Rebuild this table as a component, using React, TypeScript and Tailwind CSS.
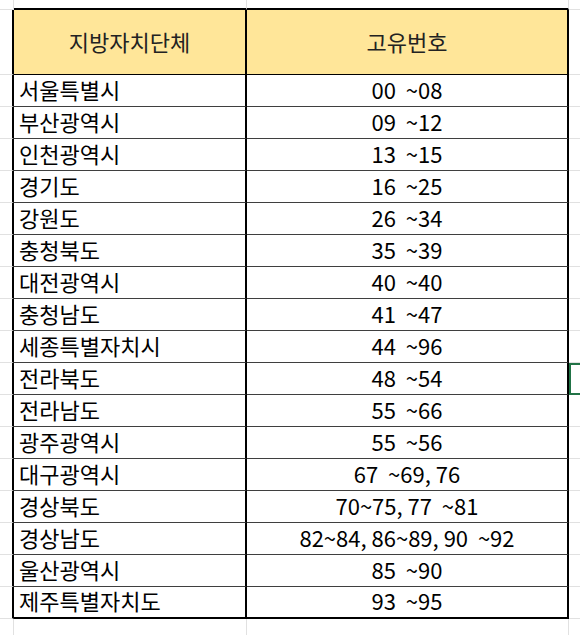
const regions: [string, string][] = [
  ['서울특별시', '00  ~08'],
  ['부산광역시', '09  ~12'],
  ['인천광역시', '13  ~15'],
  ['경기도', '16  ~25'],
  ['강원도', '26  ~34'],
  ['충청북도', '35  ~39'],
  ['대전광역시', '40  ~40'],
  ['충청남도', '41  ~47'],
  ['세종특별자치시', '44  ~96'],
  ['전라북도', '48  ~54'],
  ['전라남도', '55  ~66'],
  ['광주광역시', '55  ~56'],
  ['대구광역시', '67  ~69, 76'],
  ['경상북도', '70~75, 77  ~81'],
  ['경상남도', '82~84, 86~89, 90  ~92'],
  ['울산광역시', '85  ~90'],
  ['제주특별자치도', '93  ~95'],
];

const SELECTED = 9;

export default function App() {
  const last = regions.length - 1;
  return (
    <div
      className="w-[580px] h-[635px] overflow-hidden bg-white text-black grid grid-cols-[14px_233px_322px_1fr] grid-rows-[10px_65px_repeat(17,32px)_1fr]"
      style={{ fontFamily: '"Noto Sans CJK KR", "Noto Sans", sans-serif' }}
    >
      {/* top spacer row */}
      <div className="border-r border-b border-[#e1e1e1]" />
      <div className="border-r border-[#e1e1e1] border-b-2 border-b-black" />
      <div className="border-r border-[#e1e1e1] border-b-2 border-b-black" />
      <div className="border-b border-[#e1e1e1]" />

      {/* header */}
      <div className="border-b border-[#e1e1e1] border-r-2 border-r-black" />
      <div className="bg-[#ffe699] border-r-2 border-black border-b flex items-center justify-center text-[22px] text-[#222] pb-[2px]">
        지방자치단체
      </div>
      <div className="bg-[#ffe699] border-r-2 border-black border-b flex items-center justify-center text-[22px] text-[#222] pb-[2px]">
        고유번호
      </div>
      <div className="border-b border-[#e1e1e1]" />

      {regions.map(([name, code], i) => (
        <div key={name} className="contents">
          <div className="border-b border-[#e1e1e1] border-r-2 border-r-black" />
          <div
            className={`border-r-2 border-r-black flex items-center pl-[5px] pb-[3px] text-[22px] ${
              i === last ? 'border-b-2 border-b-black' : 'border-b border-b-[#3f3f3f]'
            }`}
          >
            {name}
          </div>
          <div
            className={`border-r-2 border-r-black flex items-center justify-center pb-[3px] text-[22px] whitespace-pre ${
              i === last ? 'border-b-2 border-b-black' : 'border-b border-b-[#3f3f3f]'
            }`}
          >
            {code}
          </div>
          <div className="relative border-b border-[#e1e1e1]">
            {i === SELECTED && (
              <div className="absolute top-0 -bottom-px left-0 -right-2 border-2 border-[#217346]" />
            )}
          </div>
        </div>
      ))}

      {/* below table */}
      <div className="border-r border-[#e1e1e1]" />
      <div className="border-r border-[#e1e1e1]" />
      <div className="border-r border-[#e1e1e1]" />
      <div />
    </div>
  );
}
